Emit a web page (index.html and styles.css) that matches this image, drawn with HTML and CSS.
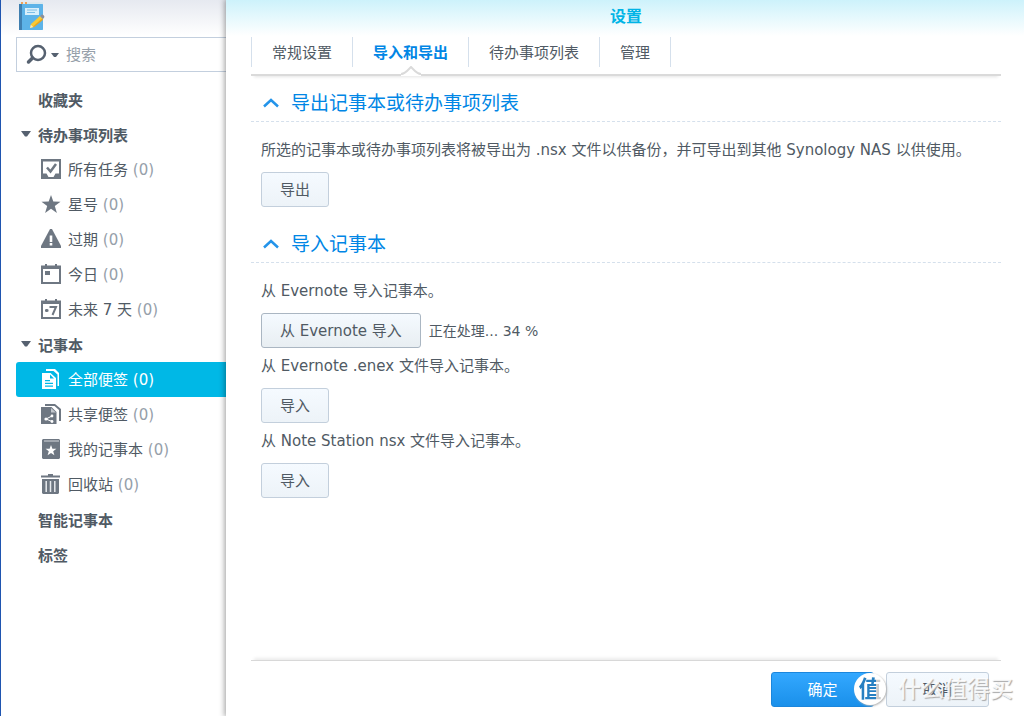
FILE: index.html
```html
<!DOCTYPE html>
<html lang="zh-CN">
<head>
<meta charset="utf-8">
<title>设置</title>
<link rel="stylesheet" href="styles.css">
</head>
<body>
<div class="app">
  <aside class="sidebar">
    <header class="brand">
      <svg class="logo" width="28" height="30" viewBox="0 0 28 30" role="img" aria-label="Note Station">
        <rect x="1" y="1" width="24" height="28" rx="1" fill="#a9cfe6"/>
        <rect x="1" y="3" width="24" height="26" rx="1" fill="#5db3e8"/>
        <rect x="1" y="3" width="3" height="26" fill="#3f7fb0"/>
        <rect x="1" y="1" width="24" height="2" fill="#dbe8ee"/>
        <path d="M3 1h2v2H3zM7 1h2v2H7z" fill="#f0a25a"/>
        <rect x="7" y="7" width="14" height="7" fill="#d9effb"/>
        <path d="M9 9h10M9 11.500h8" stroke="#7fbfe6"/>
        <path d="M12 27l1-4 9-8 3 3-9 8z" fill="#f9c936"/>
        <path d="M15 25.500l9-8 1.200 1.200-9 7.300z" fill="#e9a51f"/>
        <path d="M22 15l1.500-1.200c1-.8 3.500 1.200 2.800 2.400L25 18z" fill="#8b8f9b"/>
        <path d="M12 27l.8-3.200 2.400 2.200z" fill="#f4e7c8"/>
      </svg>
    </header>
    <form class="search">
      <button class="search-menu" type="button" aria-label="搜索选项">
        <svg width="34" height="22" viewBox="0 0 34 22">
          <circle cx="13" cy="9" r="7" fill="none" stroke="#566170" stroke-width="2.500"/>
          <path d="M7.500 14l-4 4" stroke="#566170" stroke-width="3.500" stroke-linecap="round"/>
          <path d="M26 9h8l-3 4h-2z" fill="#566170"/>
        </svg>
      </button>
      <input class="search-input" type="text" placeholder="搜索" aria-label="搜索">
    </form>
    <nav class="tree">
      <a class="node group" href="#">收藏夹</a>
      <a class="node group" href="#"><svg class="caret" width="10" height="6" viewBox="0 0 10 6"><path d="M0 0h10L6 5.500H4z"/></svg>待办事项列表</a>
      <a class="node item" href="#">
        <svg class="icon" width="22" height="22" viewBox="0 0 22 22"><path fill-rule="evenodd" d="M1 0h20v20H1zM3 2.500v12h3.500l2 3.500h5l2-3.500H19v-12z"/><path d="M7 8.500l3.500 4L16 5" fill="none" stroke="currentColor" stroke-width="2.500"/></svg>
        <span>所有任务 <span class="count">(0)</span></span></a>
      <a class="node item" href="#">
        <svg class="icon" width="22" height="22" viewBox="0 0 22 22"><path d="M11 1l2.300 6.600 7.200.1-5.700 4.300 2.100 6.900L11 14.800l-5.900 4.100 2.100-6.900L1.500 7.700l7.200-.1z"/></svg>
        <span>星号 <span class="count">(0)</span></span></a>
      <a class="node item" href="#">
        <svg class="icon" width="22" height="22" viewBox="0 0 22 22"><path d="M10 0h2l9 17v2H1v-2z"/><path d="M9.700 6.500h2.600v6.500H9.700zM9.700 14h2.600v2.500H9.700z" fill="#fff"/></svg>
        <span>过期 <span class="count">(0)</span></span></a>
      <a class="node item" href="#">
        <svg class="icon" width="22" height="22" viewBox="0 0 22 22"><path fill-rule="evenodd" d="M1 1.500h4V0h2v1.500h8V0h2v1.500h4V20H1zM3 5v13h16V5z"/><path d="M5 7h5v4H5z"/></svg>
        <span>今日 <span class="count">(0)</span></span></a>
      <a class="node item" href="#">
        <svg class="icon" width="22" height="22" viewBox="0 0 22 22"><path fill-rule="evenodd" d="M1 1.500h4V0h2v1.500h8V0h2v1.500h4V20H1zM3 5v13h16V5z"/><path d="M9.500 8H16l-3.500 8M5 11.500h3.500M6.700 10v3" fill="none" stroke="currentColor" stroke-width="2"/></svg>
        <span>未来 7 天 <span class="count">(0)</span></span></a>
      <a class="node group" href="#"><svg class="caret" width="10" height="6" viewBox="0 0 10 6"><path d="M0 0h10L6 5.500H4z"/></svg>记事本</a>
      <a class="node item selected" href="#" aria-current="page">
        <svg class="icon" width="22" height="22" viewBox="0 0 22 22"><path d="M6 0h9l4 4v13h-1.500V5.500L13.500 2H6z"/><path fill-rule="evenodd" d="M2 4h8.500L16 9v11H2zM5 11v1.200h5V11zM5 13.800V15h8v-1.200zM5 16.500v1.200h8v-1.200zM10 5.500v4h4z"/></svg>
        <span>全部便签 <span class="count">(0)</span></span></a>
      <a class="node item" href="#">
        <svg class="icon" width="22" height="22" viewBox="0 0 22 22"><path d="M5 0h10l6 5v12h-2V6l-4.500-4H5z"/><path d="M1 3h10.500L16.500 8v12H1z"/><path d="M11 4l5 4.500h-5z" fill="#c3c8ce"/><path d="M12 12l-6 3 6 2.500" fill="none" stroke="#fff"/><g fill="#fff"><circle cx="6" cy="15" r="1.600"/><circle cx="12" cy="12" r="1.400"/><circle cx="12" cy="17.500" r="1.400"/></g></svg>
        <span>共享便签 <span class="count">(0)</span></span></a>
      <a class="node item" href="#">
        <svg class="icon" width="22" height="22" viewBox="0 0 22 22"><path d="M3 0h16l1 1v18l-1 1H3l-1-1V1z"/><path d="M4 2h15" stroke="#d5d9dd"/><path d="M11 6l1.400 3.800h4l-3.200 2.500 1.200 3.900L11 13.900l-3.400 2.300 1.200-3.900-3.200-2.500h4z" fill="#fff"/></svg>
        <span>我的记事本 <span class="count">(0)</span></span></a>
      <a class="node item" href="#">
        <svg class="icon" width="22" height="22" viewBox="0 0 22 22"><path d="M1 1.500h7V0h5v1.500h7v2H1zM2 5h17v14l-1 1H3l-1-1z"/><path d="M6.200 7v11M10.500 7v11M14.800 7v11" stroke="#e8ebee" stroke-width="1.500"/></svg>
        <span>回收站 <span class="count">(0)</span></span></a>
      <a class="node group" href="#">智能记事本</a>
      <a class="node group" href="#">标签</a>
    </nav>
  </aside>

  <main class="dialog">
    <h1 class="title">设置</h1>
    <div class="tabs" role="tablist">
      <button class="tab" role="tab" type="button">常规设置</button>
      <button class="tab active" role="tab" type="button" aria-selected="true">导入和导出<svg class="notch" width="20" height="10" viewBox="0 0 20 10"><path d="M0 9c3 0 4-2 6-4l4-4 4 4c2 2 3 4 6 4v1H0z" fill="#fff"/><path d="M0 8c3 0 4-1 6-3l4-4 4 4c2 2 3 3 6 3" fill="none" stroke="#dadada" stroke-width="2"/></svg></button>
      <button class="tab" role="tab" type="button">待办事项列表</button>
      <button class="tab" role="tab" type="button">管理</button>
    </div>
    <div class="content">
      <section class="section">
        <h2 class="heading"><svg width="16" height="10" viewBox="0 0 16 10"><path d="M1 8.500L8 2l7 6.500" fill="none" stroke="#2494ea" stroke-width="2.500"/></svg>导出记事本或待办事项列表</h2>
        <p class="text">所选的记事本或待办事项列表将被导出为 .nsx 文件以供备份，并可导出到其他 Synology NAS 以供使用。</p>
        <div class="row"><button class="btn" type="button">导出</button></div>
      </section>
      <section class="section">
        <h2 class="heading"><svg width="16" height="10" viewBox="0 0 16 10"><path d="M1 8.500L8 2l7 6.500" fill="none" stroke="#2494ea" stroke-width="2.500"/></svg>导入记事本</h2>
        <p class="text">从 Evernote 导入记事本。</p>
        <div class="row"><button class="btn hover" type="button">从 Evernote 导入</button><span class="status" role="status">正在处理... 34 %</span></div>
        <p class="text">从 Evernote .enex 文件导入记事本。</p>
        <div class="row"><button class="btn" type="button">导入</button></div>
        <p class="text">从 Note Station nsx 文件导入记事本。</p>
        <div class="row"><button class="btn" type="button">导入</button></div>
      </section>
    </div>
    <footer class="footer">
      <button class="btn wide primary" type="button">确定</button>
      <button class="btn wide" type="button">取消</button>
    </footer>
  </main>
  <div class="watermark"><span class="badge"><span class="badge-glyph">值</span></span><span class="watermark-text">什么值得买</span></div>
</div>
</body>
</html>
```
FILE: styles.css
```css
* {
  box-sizing: border-box;
}

body {
  margin: 0;
  color: #505a64;
  background: #fff;
  font: 15px/20px "DejaVu Sans", "Noto Sans CJK SC", sans-serif;
}

button,
input {
  color: inherit;
  font: inherit;
}

.app {
  position: relative;
  display: grid;
  grid-template-columns: 226px 1fr;
  min-height: 100vh;
  overflow: hidden;
}

.sidebar {
  padding-left: 15px;
  border-left: 1px solid #1f55b0;
  background: linear-gradient(#e6e9f0, #fff 36px);
}

.brand {
  height: 37px;
  padding: 1px 2px;
}

.logo {
  display: block;
}

.search {
  display: flex;
  align-items: center;
  height: 35px;
  margin-bottom: 10px;
  padding-left: 8px;
  border: 1px solid #c3cfde;
  border-right: 0;
  background: #fff;
}

.search-menu {
  display: flex;
  padding: 0;
  border: 0;
  background: none;
}

.search-input {
  flex: 1;
  min-width: 0;
  padding: 0 7px;
  border: 0;
  outline: 0;
  background: none;
}

.search-input::placeholder {
  color: #96a0aa;
}

.node {
  display: flex;
  align-items: center;
  height: 35px;
  color: #505a64;
  text-decoration: none;
  white-space: nowrap;
}

.group {
  position: relative;
  padding: 2px 0 0 22px;
  font-weight: bold;
}

.caret {
  position: absolute;
  left: 5px;
  top: 14px;
  fill: #566170;
}

.item {
  gap: 6px;
  padding-left: 24px;
}

.icon {
  color: #6e7782;
  fill: currentColor;
}

.count {
  color: #96a0aa;
}

.selected {
  border-radius: 3px 0 0 3px;
  background: #00b8e6;
}

.selected,
.selected .icon,
.selected .count {
  color: #fff;
}

.dialog {
  display: flex;
  flex-direction: column;
  min-width: 0;
  padding: 0 23px 0 25px;
  background: linear-gradient(#cdf2fb, #fff 36px);
  box-shadow: 0 0 6px 1px rgba(0, 0, 0, 0.4);
}

.title {
  margin: 0;
  padding: 7px 0 10px;
  color: #00b4e6;
  font-size: 16px;
  line-height: 20px;
  text-align: center;
}

.tabs {
  display: flex;
  padding-bottom: 7px;
  border-bottom: 2px solid #dadada;
  box-shadow: 0 4px 3px -3px #e4e4e4;
}

.tab {
  position: relative;
  height: 30px;
  padding: 2px 20px 0;
  border: 0;
  border-right: 1px solid #d5e0ec;
  background: none;
}

.tab:first-child {
  border-left: 1px solid #d5e0ec;
}

.active {
  color: #0086e5;
  font-weight: bold;
}

.notch {
  position: absolute;
  left: 50%;
  bottom: -9px;
  margin-left: -10px;
}

.content {
  flex: 1;
  padding-top: 9px;
}

.section {
  margin-bottom: 19px;
}

.heading {
  display: flex;
  align-items: center;
  gap: 12px;
  margin: 0 0 18px;
  padding: 4px 12px;
  border-bottom: 1px dashed #d5e0ec;
  color: #0086e5;
  font-size: 19px;
  font-weight: normal;
  line-height: 28px;
}

.text {
  margin: 0 10px 12px;
}

.row {
  display: flex;
  align-items: center;
  gap: 8px;
  margin: 0 10px 8px;
}

.btn {
  height: 35px;
  padding: 0 18px;
  border: 1px solid #c3cfdc;
  border-radius: 3px;
  background: linear-gradient(#f5faff, #edf3f8);
}

.hover {
  border-color: #aab6c2;
  background: linear-gradient(#f5faff, #e8eef2);
}

.wide {
  width: 103px;
}

.primary {
  border-color: #1b86dc;
  color: #fff;
  background: linear-gradient(#33a8ff, #1a90ea);
}

.status {
  font-size: 14px;
}

.footer {
  display: flex;
  justify-content: flex-end;
  gap: 12px;
  padding: 11px 12px 9px;
  border-top: 1px solid #d8d8d8;
  box-shadow: 0 -5px 3px -3px #ececec;
}

.watermark {
  position: absolute;
  right: 11px;
  bottom: 11px;
  display: flex;
  align-items: center;
  gap: 12px;
  pointer-events: none;
}

.badge {
  display: grid;
  place-items: center;
  width: 32px;
  height: 32px;
  border-radius: 50%;
  background: #fff;
  box-shadow: 1px 1px 2px #b8b8b8;
}

.badge-glyph {
  color: transparent;
  background: linear-gradient(90deg, #2780c2 75%, #ccc 75%);
  background-clip: text;
  font-size: 23px;
  font-weight: bold;
  line-height: 28px;
}

.watermark-text {
  color: rgba(255, 255, 255, 0.85);
  font-size: 23px;
  font-weight: 500;
  line-height: 32px;
  text-shadow: 1px 1px 1px #aaa;
}
```
